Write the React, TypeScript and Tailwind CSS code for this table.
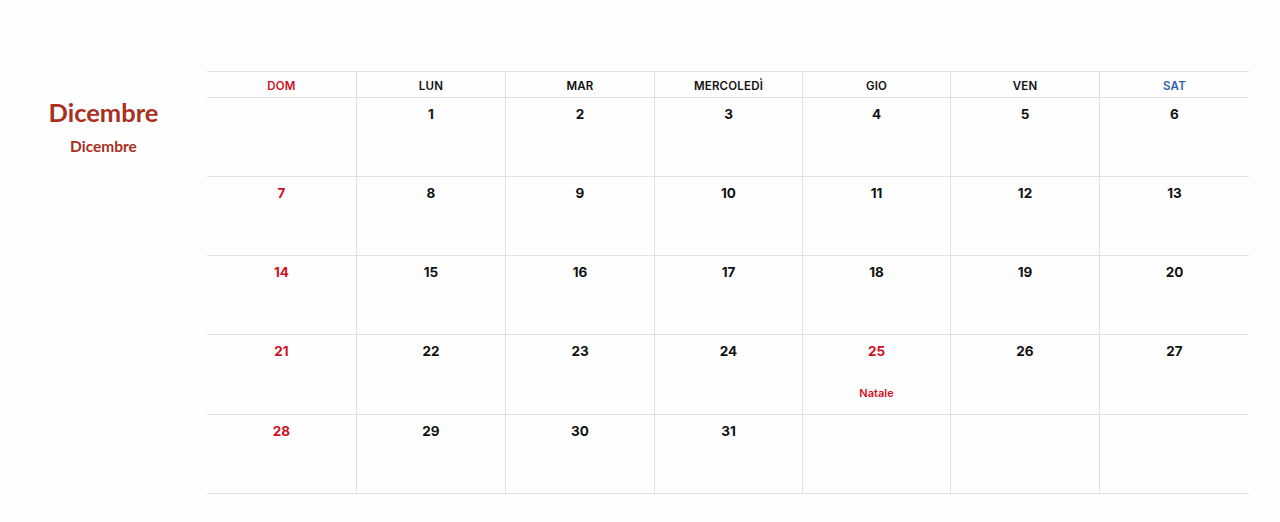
import React from "react";

const DAYS = [
  { label: "DOM", color: "text-[#d0101e]" },
  { label: "LUN", color: "text-[#111]" },
  { label: "MAR", color: "text-[#111]" },
  { label: "MERCOLEDÌ", color: "text-[#111]" },
  { label: "GIO", color: "text-[#111]" },
  { label: "VEN", color: "text-[#111]" },
  { label: "SAT", color: "text-[#2f63a8]" },
];

const HOLIDAYS: Record<number, string> = { 25: "Natale" };

// dicembre: primo giorno cade di lunedì
const cells: (number | null)[] = [null];
for (let d = 1; d <= 31; d++) cells.push(d);
while (cells.length % 7 !== 0) cells.push(null);

export default function App() {
  return (
    <div
      className="w-[1280px] h-[522px] bg-[#fefefe] pt-[71px] flex"
      style={{ fontFamily: "Lato, 'Liberation Sans', sans-serif" }}
    >
      <div className="w-[207px] shrink-0 flex flex-col items-center pt-[97px] -mt-[71px] text-[#a8301f]">
        <div className="text-[25.5px] leading-[30px] font-bold">Dicembre</div>
        <div className="text-[15.5px] leading-[20px] font-bold mt-[9px]">Dicembre</div>
      </div>

      <div className="w-[1042px]" style={{ fontFamily: "Inter, 'Liberation Sans', sans-serif" }}>
        <div className="grid grid-cols-[150px_149px_149px_148px_148px_149px_149px] border-t border-b border-[#e2e2e6] h-[27px]">
          {DAYS.map((d, i) => (
            <div
              key={d.label}
              className={`flex items-center justify-center pt-[4px] text-[11.5px] font-semibold tracking-[0.2px] ${d.color} ${
                i < 6 ? "border-r border-[#e2e2e6]" : ""
              }`}
            >
              {d.label}
            </div>
          ))}
        </div>

        <div className="grid grid-cols-[150px_149px_149px_148px_148px_149px_149px] grid-rows-[79px_79px_79px_80px_79px]">
          {cells.map((day, i) => {
            const col = i % 7;
            const holiday = day ? HOLIDAYS[day] : undefined;
            const red = col === 0 || holiday;
            return (
              <div
                key={i}
                className={`border-b border-[#e2e2e6] flex flex-col items-center pt-[8px] ${
                  col < 6 ? "border-r" : ""
                }`}
              >
                {day && (
                  <span
                    className={`text-[13.5px] leading-[16px] font-bold ${
                      red ? "text-[#d0101e]" : "text-[#111]"
                    }`}
                  >
                    {day}
                  </span>
                )}
                {holiday && (
                  <span className="mt-[27px] text-[11px] leading-[14px] font-semibold text-[#d0101e]">
                    {holiday}
                  </span>
                )}
              </div>
            );
          })}
        </div>
      </div>
    </div>
  );
}
